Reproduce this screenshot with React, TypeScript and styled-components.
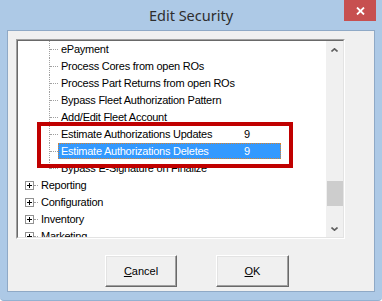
import React from "react";
import styled, { createGlobalStyle, css } from "styled-components";

const Global = createGlobalStyle`
  html, body { margin: 0; padding: 0; background: #ffffff; }
  #root { width: 382px; height: 301px; }
`;

const Window = styled.div`
  width: 382px;
  height: 301px;
  box-sizing: border-box;
  background: #adc9e6;
  display: flex;
  flex-direction: column;
  border-bottom: 1px solid #93b1d1;
  border-radius: 0 0 4px 4px;
  overflow: hidden;
`;

const TitleBar = styled.div`
  height: 30px;
  flex: none;
  display: grid;
  grid-template-columns: 1fr auto 1fr;
  align-items: start;
`;

const Title = styled.div`
  grid-column: 2;
  font-family: "Noto Sans", "Open Sans", sans-serif;
  font-size: 14.5px;
  color: #2e2e2e;
  line-height: 30px;
  padding-top: 0px;
`;

const CloseCell = styled.div`
  grid-column: 3;
  justify-self: end;
  padding-right: 6px;
`;

const CloseButton = styled.div`
  width: 32px;
  height: 21px;
  background: #c75050;
  display: flex;
  align-items: center;
  justify-content: center;
`;

const Client = styled.div`
  margin: 0 7px;
  width: 368px;
  height: 262px;
  box-sizing: border-box;
  border: 1px solid #8fa9c6;
  background: #f0f0f0;
  padding: 8px 0 0 8px;
  display: flex;
  flex-direction: column;
`;

const Tree = styled.div`
  width: 329px;
  height: 200px;
  box-sizing: border-box;
  border-style: solid;
  border-width: 1px;
  border-color: #a0a0a0 #ffffff #ffffff #a0a0a0;
  background: #ffffff;
  display: flex;
`;

const TreeInner = styled.div`
  flex: 1;
  display: flex;
  border-style: solid;
  border-width: 1px;
  border-color: #696969 #e3e3e3 #e3e3e3 #696969;
`;

const Rows = styled.div`
  position: relative;
  flex: 1;
  height: 196px;
  overflow: hidden;
  display: flex;
  flex-direction: column;
`;

const Row = styled.div`
  height: 17px;
  flex: none;
  display: flex;
  align-items: stretch;
`;

const Guide = styled.div<{ $level: number; $last?: boolean }>`
  position: relative;
  flex: none;
  width: ${(p) => (p.$level === 2 ? 40 : 20)}px;
  ${(p) =>
    p.$level === 2 &&
    css`
      &::before {
        content: "";
        position: absolute;
        left: 31px;
        top: 0;
        height: ${p.$last ? "9px" : "17px"};
        border-left: 1px dotted #a0a0a0;
      }
    `}
  &::after {
    content: "";
    position: absolute;
    left: ${(p) => (p.$level === 2 ? 32 : 16)}px;
    top: 8px;
    width: ${(p) => (p.$level === 2 ? 8 : 4)}px;
    border-top: 1px dotted #a0a0a0;
  }
`;

const Expander = styled.div`
  position: absolute;
  left: 7px;
  top: 4px;
  width: 9px;
  height: 9px;
  box-sizing: border-box;
  border: 1px solid #919191;
  background: #fff;
  display: flex;
  align-items: center;
  justify-content: center;
`;

const Label = styled.div<{ $selected?: boolean }>`
  display: flex;
  align-items: center;
  box-sizing: border-box;
  height: 16px;
  padding: 0 2px;
  font-family: "Liberation Sans", Arial, sans-serif;
  font-size: 11px;
  letter-spacing: -0.25px;
  color: #000;
  white-space: nowrap;
  border: 1px solid transparent;
  ${(p) =>
    p.$selected &&
    css`
      background: #3399ff;
      color: #ffffff;
      border: 1px dotted #d9822b;
    `}
`;

const LabelText = styled.span<{ $col?: boolean }>`
  display: inline-block;
  width: ${(p) => (p.$col ? "183px" : "auto")};
`;

const Value = styled.span`
  display: inline-block;
  width: 34px;
`;

const Annotation = styled.div`
  position: absolute;
  left: 19px;
  top: 81px;
  width: 256px;
  height: 46px;
  box-sizing: border-box;
  border: 4px solid #c00000;
  pointer-events: none;
`;

const Scrollbar = styled.div`
  width: 17px;
  flex: none;
  background: #f0f0f0;
  display: flex;
  flex-direction: column;
`;

const Arrow = styled.div`
  height: 17px;
  flex: none;
  display: flex;
  align-items: center;
  justify-content: center;
`;

const Track = styled.div`
  flex: 1;
  display: flex;
  flex-direction: column;
`;

const Thumb = styled.div`
  margin-top: 123px;
  margin-left: 1px;
  height: 25px;
  background: #cdcdcd;
`;

const ButtonRow = styled.div`
  margin-top: 16px;
  padding-left: 89px;
  display: flex;
  gap: 39px;
`;

const Button = styled.div<{ $w: number }>`
  width: ${(p) => p.$w}px;
  height: 32px;
  box-sizing: border-box;
  background: #f0f0f0;
  border-style: solid;
  border-width: 1px;
  border-color: #ffffff #696969 #696969 #ffffff;
  box-shadow: inset -1px -1px 0 #a0a0a0, inset 1px 1px 0 #e3e3e3;
  display: flex;
  align-items: center;
  justify-content: center;
  font-family: "Liberation Sans", Arial, sans-serif;
  font-size: 11px;
  color: #000;
  padding-bottom: 1px;
`;

const Mnemonic = styled.span`
  text-decoration: underline;
  text-underline-offset: 1px;
`;

const Chevron = ({ up }: { up?: boolean }) => (
  <svg width="7" height="4" viewBox="0 0 7 4">
    <path
      d={up ? "M0.5 3.5 L3.5 0.8 L6.5 3.5" : "M0.5 0.5 L3.5 3.2 L6.5 0.5"}
      stroke="#606060"
      strokeWidth="1.6"
      fill="none"
    />
  </svg>
);

const Plus = () => (
  <svg width="5" height="5" viewBox="0 0 5 5">
    <rect x="0" y="2" width="5" height="1" fill="#000" />
    <rect x="2" y="0" width="1" height="5" fill="#000" />
  </svg>
);

type Item = {
  text: string;
  level: 1 | 2;
  value?: string;
  selected?: boolean;
  last?: boolean;
};

const items: Item[] = [
  { text: "ePayment", level: 2 },
  { text: "Process Cores from open ROs", level: 2 },
  { text: "Process Part Returns from open ROs", level: 2 },
  { text: "Bypass Fleet Authorization Pattern", level: 2 },
  { text: "Add/Edit Fleet Account", level: 2 },
  { text: "Estimate Authorizations Updates", level: 2, value: "9" },
  { text: "Estimate Authorizations Deletes", level: 2, value: "9", selected: true },
  { text: "Bypass E-Signature on Finalize", level: 2, last: true },
  { text: "Reporting", level: 1 },
  { text: "Configuration", level: 1 },
  { text: "Inventory", level: 1 },
  { text: "Marketing", level: 1 },
];

export default function App() {
  return (
    <>
      <Global />
      <Window>
        <TitleBar>
          <Title>Edit Security</Title>
          <CloseCell>
            <CloseButton>
              <svg width="9" height="8" viewBox="0 0 9 8">
                <path d="M1 0.5 L8 7.5 M8 0.5 L1 7.5" stroke="#fff" strokeWidth="1.8" />
              </svg>
            </CloseButton>
          </CloseCell>
        </TitleBar>
        <Client>
          <Tree>
            <TreeInner>
              <Rows>
                {items.map((it) => (
                  <Row key={it.text}>
                    <Guide $level={it.level} $last={it.last}>
                      {it.level === 1 && (
                        <Expander>
                          <Plus />
                        </Expander>
                      )}
                    </Guide>
                    <Label $selected={it.selected}>
                      <LabelText $col={!!it.value}>{it.text}</LabelText>
                      {it.value && <Value>{it.value}</Value>}
                    </Label>
                  </Row>
                ))}
                <Annotation />
              </Rows>
              <Scrollbar>
                <Arrow>
                  <Chevron up />
                </Arrow>
                <Track>
                  <Thumb />
                </Track>
                <Arrow>
                  <Chevron />
                </Arrow>
              </Scrollbar>
            </TreeInner>
          </Tree>
          <ButtonRow>
            <Button $w={72}>
              <span>
                <Mnemonic>C</Mnemonic>ancel
              </span>
            </Button>
            <Button $w={73}>
              <span>
                <Mnemonic>O</Mnemonic>K
              </span>
            </Button>
          </ButtonRow>
        </Client>
      </Window>
    </>
  );
}
